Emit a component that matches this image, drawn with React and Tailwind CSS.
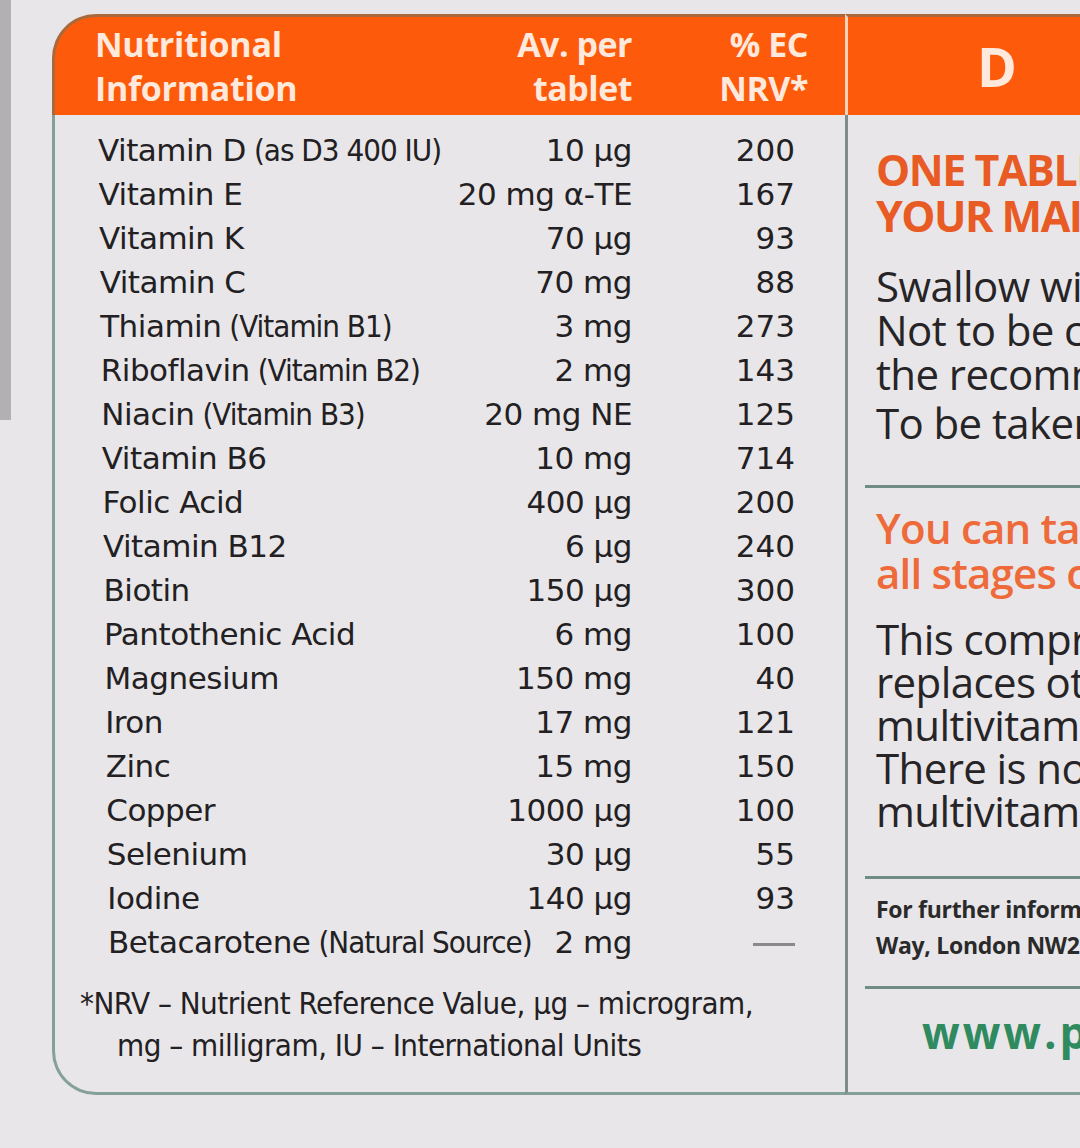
const rows = [
  ["Vitamin D", "(as D3 400 IU)", "10 µg", "200"],
  ["Vitamin E", "", "20 mg α-TE", "167"],
  ["Vitamin K", "", "70 µg", "93"],
  ["Vitamin C", "", "70 mg", "88"],
  ["Thiamin", "(Vitamin B1)", "3 mg", "273"],
  ["Riboflavin", "(Vitamin B2)", "2 mg", "143"],
  ["Niacin", "(Vitamin B3)", "20 mg NE", "125"],
  ["Vitamin B6", "", "10 mg", "714"],
  ["Folic Acid", "", "400 µg", "200"],
  ["Vitamin B12", "", "6 µg", "240"],
  ["Biotin", "", "150 µg", "300"],
  ["Pantothenic Acid", "", "6 mg", "100"],
  ["Magnesium", "", "150 mg", "40"],
  ["Iron", "", "17 mg", "121"],
  ["Zinc", "", "15 mg", "150"],
  ["Copper", "", "1000 µg", "100"],
  ["Selenium", "", "30 µg", "55"],
  ["Iodine", "", "140 µg", "93"],
  ["Betacarotene", "(Natural Source)", "2 mg", "—"],
];

const tableFont = "font-['DejaVu_Sans',sans-serif]";
const narrowFont = "font-['DejaVu_Sans',sans-serif] [font-stretch:condensed]";
const labelFont = "font-['Open_Sans','Noto_Sans',sans-serif]";

function NutrientRow({ name, note, amount, nrv, index }) {
  return (
    <div
      className="flex items-center h-[44px] text-[31px] leading-[44px] text-[#222022]"
      style={{ paddingLeft: 43 + index * 0.55 }}
    >
      <div className="flex-1 whitespace-nowrap">
        <span className="tracking-[-0.5px]">{name}</span>
        {note && (
          <span className={`${narrowFont} ml-[8px] tracking-[-1px]`}>
            {note}
          </span>
        )}
      </div>
      <div className="whitespace-nowrap text-right tracking-[-0.5px]">
        {amount}
      </div>
      <div className="w-[163px] text-right">
        {nrv === "—" ? (
          <span className="inline-block w-[42px] h-[3px] bg-[#8a8a8a] align-middle" />
        ) : (
          nrv
        )}
      </div>
    </div>
  );
}

function Rule() {
  return <div className="h-[3px] bg-[#6f8d82] -ml-[11px]" />;
}

export default function App() {
  return (
    <div className="w-[1080px] h-[1148px] overflow-hidden bg-[#e8e6e8] flex items-start">
      <div className="w-[11px] h-[420px] bg-[#b2b0b2] shrink-0" />

      {/* Label */}
      <div className="ml-[41px] mt-[14px] flex shrink-0 w-[1100px]">
        {/* Nutrition column */}
        <div className={`w-[793px] shrink-0 flex flex-col ${tableFont}`}>
          <div
            className={`h-[101px] bg-[#fd5a0b] rounded-tl-[44px] border-t-[3px] border-l-[3px] border-[#a86a3c] pl-[40px] pr-[37px] pt-[5px] flex text-[#ffe8dc] font-bold text-[34px] leading-[44px] ${labelFont}`}
          >
            <div className="flex-1 tracking-[-0.3px]">
              <div>Nutritional</div>
              <div>Information</div>
            </div>
            <div className="text-right tracking-[-0.5px]">
              <div>Av. per</div>
              <div>tablet</div>
            </div>
            <div className="w-[176px] text-right tracking-[-0.5px]">
              <div>% EC</div>
              <div>NRV*</div>
            </div>
          </div>

          <div className="h-[980px] border-l-[3px] border-b-[3px] border-[#83a197] rounded-bl-[44px] pr-[50px] pt-[13px]">
            {rows.map((r, i) => (
              <NutrientRow
                key={r[0]}
                name={r[0]}
                note={r[1]}
                amount={r[2]}
                nrv={r[3]}
                index={i}
              />
            ))}
            <div
              className={`${narrowFont} mt-[18px] pl-[25px] text-[31px] leading-[42px] tracking-[-0.5px] text-[#222022] whitespace-nowrap`}
            >
              <div>*NRV – Nutrient Reference Value, µg – microgram,</div>
              <div className="pl-[37px]">mg – milligram, IU – International Units</div>
            </div>
          </div>
        </div>

        {/* Directions column */}
        <div className={`flex-1 flex flex-col overflow-hidden ${labelFont}`}>
          <div className="h-[101px] bg-[#fd5a0b] border-t-[3px] border-l-[3px] border-t-[#a86a3c] border-l-[#f6d2bd] pl-[129px] flex items-center">
            <span className="text-[54px] font-bold text-[#ffe8dc] leading-none tracking-[80px] whitespace-nowrap">
              DIRECTIONS
            </span>
          </div>

          <div className="h-[980px] border-l-[3px] border-b-[3px] border-l-[#7d8c88] border-b-[#83a197] pl-[28px] pt-[32px] whitespace-nowrap">
            <div className="text-[43px] font-bold leading-[46px] text-[#e85b25] tracking-[-1.5px]">
              <div>ONE TABLET A DAY</div>
              <div>YOUR MAIN MEAL</div>
            </div>

            <div className="mt-[25px] text-[42px] leading-[44px] text-[#262426] tracking-[-0.6px]">
              <div>Swallow with water</div>
              <div>Not to be chewed</div>
              <div>the recommended</div>
              <div className="mt-[5px]">To be taken daily</div>
            </div>

            <div className="mt-[40px]">
              <Rule />
            </div>

            <div className="mt-[17px] text-[42px] font-semibold leading-[45px] text-[#ee6a3a] tracking-[-0.8px]">
              <div>You can take it</div>
              <div>all stages of</div>
            </div>

            <div className="mt-[22px] text-[42px] leading-[43px] text-[#262426] tracking-[-0.6px]">
              <div>This comprehensive</div>
              <div>replaces other</div>
              <div>multivitamins</div>
              <div>There is no need</div>
              <div>multivitamins</div>
            </div>

            <div className="mt-[44px]">
              <Rule />
            </div>

            <div className="mt-[12px] text-[23px] font-bold leading-[36px] text-[#2a2a2a] tracking-[-0.3px]">
              <div>For further information</div>
              <div>Way, London NW2</div>
            </div>

            <div className="mt-[23px]">
              <Rule />
            </div>

            <div className="mt-[18px] pl-[46px] text-[44px] font-bold leading-[50px] text-[#2f8a5f] tracking-[3px]">
              www.pregnacare
            </div>
          </div>
        </div>
      </div>
    </div>
  );
}
